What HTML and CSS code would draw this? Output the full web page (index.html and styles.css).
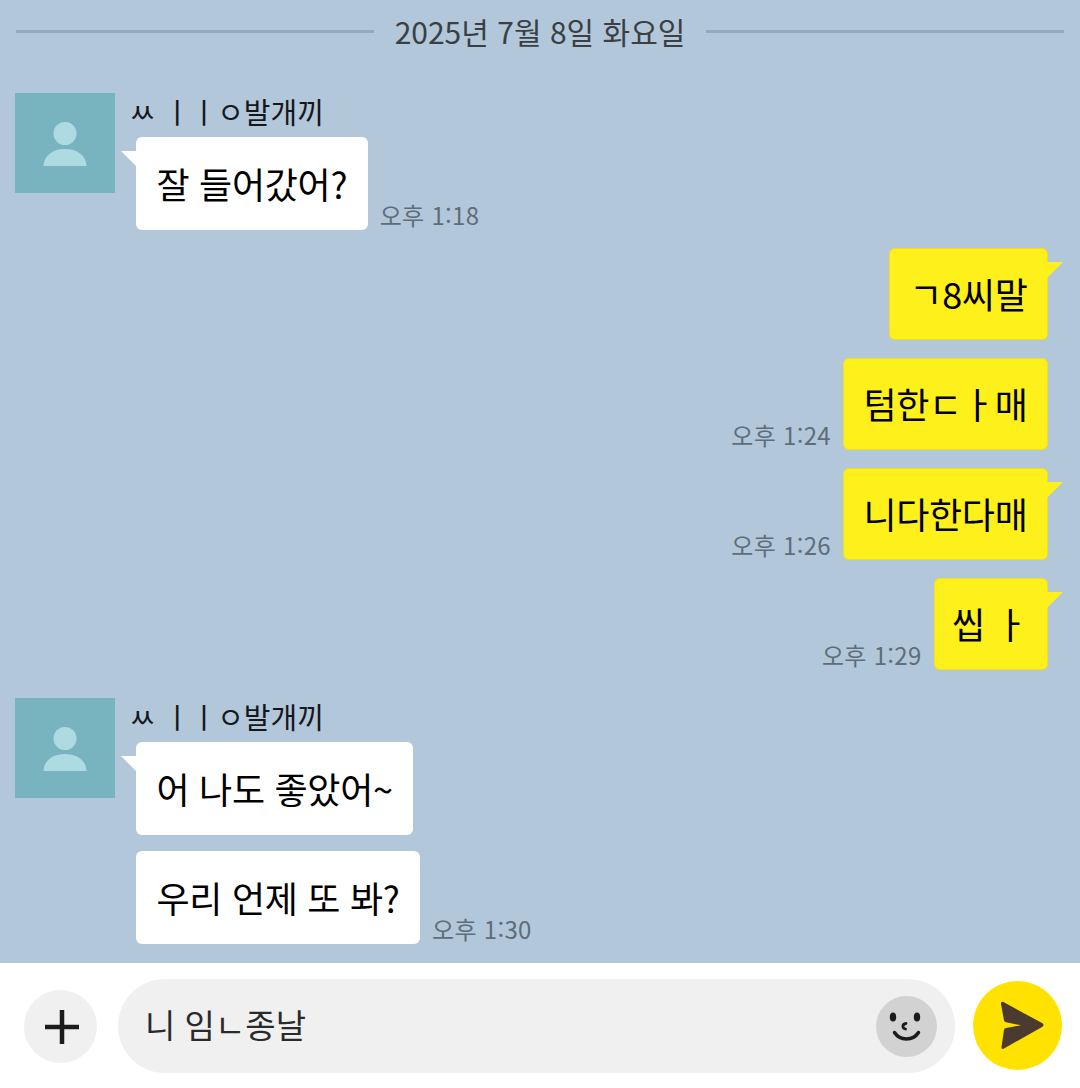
FILE: index.html
```html
<!DOCTYPE html>
<html lang="ko">
<head>
  <meta charset="UTF-8">
  <meta name="viewport" content="width=device-width, initial-scale=1.0">
  <link rel="stylesheet" href="styles.css">
  <title>채팅</title>
</head>
<body>
  <div class="chat">
    <div class="date-row">
      <span class="date-line"></span>
      <span class="date-text">2025년 7월 8일 화요일</span>
      <span class="date-line"></span>
    </div>

    <div class="group group-first">
      <div class="avatar">
        <svg width="44" height="44" viewBox="0 0 44 44">
          <circle cx="22" cy="11.5" r="11.5" fill="#aedae1"/>
          <path d="M0.5 44 C1 33 10 27 22 27 C34 27 43 33 43.500 44 Z" fill="#aedae1"/>
        </svg>
      </div>
      <div class="group-body">
        <div class="name">ㅆ ㅣㅣㅇ발개끼</div>
        <div class="row">
          <div class="bubble in tail">잘 들어갔어?</div>
          <span class="time">오후 1:18</span>
        </div>
      </div>
    </div>

    <div class="mine">
      <div class="row row-mine"><div class="bubble out tail">ㄱ8씨말</div></div>
      <div class="row row-mine"><span class="time">오후 1:24</span><div class="bubble out">텀한ㄷㅏ매</div></div>
      <div class="row row-mine"><span class="time">오후 1:26</span><div class="bubble out tail">니다한다매</div></div>
      <div class="row row-mine"><span class="time">오후 1:29</span><div class="bubble out tail short">씹 ㅏ</div></div>
    </div>

    <div class="group group-second">
      <div class="avatar">
        <svg width="44" height="44" viewBox="0 0 44 44">
          <circle cx="22" cy="11.5" r="11.5" fill="#aedae1"/>
          <path d="M0.5 44 C1 33 10 27 22 27 C34 27 43 33 43.500 44 Z" fill="#aedae1"/>
        </svg>
      </div>
      <div class="group-body">
        <div class="name">ㅆ ㅣㅣㅇ발개끼</div>
        <div class="row"><div class="bubble in tail">어 나도 좋았어~</div></div>
        <div class="row row-next">
          <div class="bubble in">우리 언제 또 봐?</div>
          <span class="time">오후 1:30</span>
        </div>
      </div>
    </div>
  </div>

  <div class="composer">
    <div class="plus">
      <svg width="36" height="36" viewBox="0 0 36 36">
        <path d="M18 1 V35 M1 18 H35" stroke="#1c1c1c" stroke-width="4.500" fill="none"/>
      </svg>
    </div>
    <div class="input">
      <span class="input-text">니 임ㄴ종날</span>
      <div class="emoji">
        <svg width="61" height="61" viewBox="0 0 61 61">
          <ellipse cx="17" cy="21" rx="3.200" ry="4.500" fill="#1c1c1c"/>
          <ellipse cx="41" cy="21" rx="3.200" ry="4.500" fill="#1c1c1c"/>
          <path d="M30 27.500 C26 28 26 32 29.500 33" stroke="#1c1c1c" stroke-width="2.800" fill="none" stroke-linecap="round"/>
          <path d="M18.500 36.500 C24 45 37 45 42.500 36.500" stroke="#1c1c1c" stroke-width="3.500" fill="none" stroke-linecap="round"/>
        </svg>
      </div>
    </div>
    <div class="send">
      <svg width="89" height="89" viewBox="0 0 89 89">
        <path d="M30 20.800 L69.500 42.300 Q71.500 44 69.500 45.700 L30.500 67.800 Q28.300 68.500 28.500 66 L31 48.800 Q31.300 47.300 33 47 L48 44.300 L33 41.300 Q31.300 41 31 39.300 L28 23 Q27.800 20.300 30 20.800 Z" fill="#4b3a30"/>
      </svg>
    </div>
  </div>
</body>
</html>
```
FILE: styles.css
```css
* {
  box-sizing: border-box;
}
body {
  margin: 0;
  height: 1088px;
  overflow: hidden;
  background: #fff;
  font-family: "Noto Sans CJK KR", "Noto Sans", sans-serif;
  color: #000;
}

.chat {
  height: 963px;
  background: #b2c7da;
  padding: 0 16px 0 15px;
}

.date-row {
  height: 64px;
  display: flex;
  align-items: center;
  gap: 21px;
  margin-left: 1px;
}
.date-line {
  flex: 1;
  height: 3px;
  margin-top: -1px;
  background: #95aabf;
}
.date-text {
  font-size: 30px;
  color: #3a3f44;
  line-height: 62px;
  margin-bottom: 2px;
}

.group {
  display: flex;
}
.group-first {
  margin-top: 29px;
}
.group-second {
  margin-top: 28px;
}
.avatar {
  width: 100px;
  height: 100px;
  flex: none;
  background: #78b4c0;
  display: flex;
  align-items: center;
  justify-content: center;
  padding-top: 2px;
}
.group-body {
  margin-left: 15px;
}
.name {
  height: 44px;
  margin-left: -1px;
  font-size: 29px;
  line-height: 36px;
  color: #15181b;
  white-space: pre;
}

.row {
  display: flex;
  align-items: flex-end;
  margin-left: 6px;
}
.row-next {
  margin-top: 16px;
}
.row-mine {
  justify-content: flex-end;
  margin: 0 16px 18px 0;
}
.row-mine:last-child {
  margin-bottom: 0;
}
.row-mine .bubble {
  height: 92px;
  line-height: 90px;
}
.mine {
  margin-top: 18px;
}

.bubble {
  position: relative;
  height: 93px;
  padding: 0 20.5px;
  border-radius: 6px;
  font-size: 36px;
  letter-spacing: -0.3px;
  line-height: 92px;
  white-space: nowrap;
}
.bubble.in {
  background: #fff;
}
.bubble.out {
  background: #fef01b;
  box-shadow: inset 0 0 0 1px rgba(214, 196, 60, 0.4);
}
.bubble.short {
  padding-left: 18.5px;
}
.bubble.tail::after {
  content: "";
  position: absolute;
  top: 14px;
  width: 16px;
  height: 16px;
}
.bubble.in.tail::after {
  left: -15px;
  background: #fff;
  clip-path: polygon(0 0, 94% 0, 100% 6%, 100% 100%);
}
.bubble.out.tail::after {
  right: -15px;
  background: #fef01b;
  clip-path: polygon(0 0, 100% 0, 0 100%);
}

.time {
  font-size: 24px;
  letter-spacing: 0.3px;
  line-height: 30px;
  color: #5f6d79;
  white-space: nowrap;
}
.row .bubble + .time {
  margin-left: 12px;
}
.row .time + .bubble {
  margin-left: 12px;
}

.composer {
  height: 125px;
  display: flex;
  align-items: flex-start;
  padding-left: 24px;
}
.plus {
  width: 73px;
  height: 73px;
  margin-top: 27px;
  flex: none;
  border-radius: 50%;
  background: #f0f0f0;
  display: flex;
  align-items: center;
  justify-content: center;
}
.plus svg {
  margin-left: 2px;
}
.input {
  width: 837px;
  height: 94px;
  margin: 16px 0 0 21px;
  flex: none;
  border-radius: 47px;
  background: #f0f0f0;
  display: flex;
  align-items: center;
  justify-content: space-between;
  padding: 0 18px 0 27px;
}
.input-text {
  font-size: 33px;
  line-height: 40px;
  margin-top: -5px;
  color: #2a2a2a;
}
.emoji {
  width: 61px;
  height: 61px;
  border-radius: 50%;
  background: #d2d2d2;
}
.send {
  width: 89px;
  height: 89px;
  margin: 18px 0 0 18px;
  flex: none;
  border-radius: 50%;
  background: #ffe200;
}
```
